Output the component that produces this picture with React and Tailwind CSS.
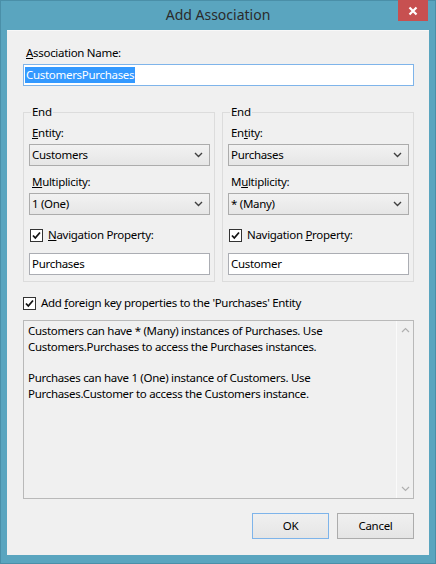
import React from "react";

const font = { fontFamily: '"Noto Sans", "Open Sans", sans-serif' };

function Chevron() {
  return (
    <svg width="9" height="6" viewBox="0 0 9 6" className="shrink-0">
      <path d="M1 1 L4.5 4.5 L8 1" fill="none" stroke="#404040" strokeWidth="1.4" />
    </svg>
  );
}

function Select({ value }) {
  return (
    <div className="h-[22px] border border-[#acacac] bg-gradient-to-b from-[#f2f2f2] to-[#e6e6e6] flex items-center pl-[2px] pr-[6px] text-black">
      <span className="flex-1">{value}</span>
      <Chevron />
    </div>
  );
}

function Checkbox() {
  return (
    <div className="w-[13px] h-[13px] border border-[#333] bg-white flex items-center justify-center shrink-0">
      <svg width="11" height="11" viewBox="0 0 11 11">
        <path d="M2 5.5 L4.3 8 L9 2.5" fill="none" stroke="#111" strokeWidth="1.8" />
      </svg>
    </div>
  );
}

function Group({ entity, multiplicity, nav, entityLabel, multLabel, navLabel }) {
  return (
    <div className="w-[192px] h-[170px] border border-[#dcdcdc] pl-[5px] pr-[4px] pb-[6px]">
      <div className="h-[0px] relative">
        <span className="absolute -top-[9px] left-[2px] bg-[#f0f0f0] px-[1px] leading-[16px] text-black">End</span>
      </div>
      <div className="mt-[12px] h-[16px] leading-[16px] pl-[3px]">{entityLabel}</div>
      <div className="mt-[3px]"><Select value={entity} /></div>
      <div className="mt-[8px] h-[16px] leading-[16px] pl-[3px]">{multLabel}</div>
      <div className="mt-[3px]"><Select value={multiplicity} /></div>
      <div className="mt-[12px] h-[16px] flex items-center gap-[5px] pl-[1px]">
        <Checkbox />
        <span className="leading-[16px]">{navLabel}</span>
      </div>
      <div className="mt-[10px] h-[22px] border border-[#abadb3] bg-white flex items-center pl-[2px]">{nav}</div>
    </div>
  );
}

export default function App() {
  return (
    <div style={font} className="w-[436px] h-[564px] bg-[#5aa5bf] border border-[#4a8fa8] flex flex-col text-black text-[11.5px] tracking-[-0.3px]">
      <div className="h-[29px] relative flex items-center justify-center">
        <span className="text-[14px] tracking-[0px] text-[#2b2b2b] leading-[20px] -mt-[1px]">Add Association</span>
        <div className="absolute top-[-1px] right-[7px] w-[30px] h-[21px] bg-[#c75050] flex items-center justify-center">
          <svg width="10" height="10" viewBox="0 0 10 10">
            <path d="M1.5 1.5 L8.5 8.5 M8.5 1.5 L1.5 8.5" stroke="#fff" strokeWidth="2.2" />
          </svg>
        </div>
      </div>
      <div className="mx-[6px] h-[525px] bg-[#f0f0f0] border-t border-[#f8f8f8] pl-[16px] pr-[15px] pt-[14px] flex flex-col">
        <div className="h-[16px] leading-[16px] pl-[3px]"><u>A</u>ssociation Name:</div>
        <div className="mt-[3px] h-[22px] border border-[#7eb4ea] bg-white flex items-center pl-[1px]">
          <span className="bg-[#3399ff] text-white leading-[16px] px-[1px]">CustomersPurchases</span>
        </div>
        <div className="mt-[26px] flex gap-[7px]">
          <Group
            entity="Customers"
            multiplicity="1 (One)"
            nav="Purchases"
            entityLabel={<><u>E</u>ntity:</>}
            multLabel={<><u>M</u>ultiplicity:</>}
            navLabel={<><u>N</u>avigation Property:</>}
          />
          <Group
            entity="Purchases"
            multiplicity="* (Many)"
            nav="Customer"
            entityLabel={<>En<u>t</u>ity:</>}
            multLabel={<>M<u>u</u>ltiplicity:</>}
            navLabel={<>Navigation <u>P</u>roperty:</>}
          />
        </div>
        <div className="mt-[13px] h-[16px] flex items-center gap-[5px]">
          <Checkbox />
          <span className="leading-[16px]">Add <u>f</u>oreign key properties to the 'Purchases' Entity</span>
        </div>
        <div className="mt-[9px] h-[179px] border border-[#b9b9b9] flex">
          <div className="flex-1 pl-[4px] pt-[2px] leading-[15.5px]">
            <div>Customers can have * (Many) instances of Purchases. Use</div>
            <div>Customers.Purchases to access the Purchases instances.</div>
            <div className="h-[16px]"></div>
            <div>Purchases can have 1 (One) instance of Customers. Use</div>
            <div>Purchases.Customer to access the Customers instance.</div>
          </div>
          <div className="w-[17px] border-l border-[#fafafa] flex flex-col items-center justify-between py-[6px]">
            <svg width="9" height="6" viewBox="0 0 9 6">
              <path d="M1 5 L4.5 1.5 L8 5" fill="none" stroke="#b0b0b0" strokeWidth="1.2" />
            </svg>
            <svg width="9" height="6" viewBox="0 0 9 6">
              <path d="M1 1 L4.5 4.5 L8 1" fill="none" stroke="#b0b0b0" strokeWidth="1.2" />
            </svg>
          </div>
        </div>
        <div className="mt-[14px] flex justify-end gap-[8px]">
          <div className="w-[77px] h-[26px] border border-[#7eb4ea] bg-gradient-to-b from-[#f0f0f0] to-[#e5e5e5] flex items-center justify-center">OK</div>
          <div className="w-[77px] h-[26px] border border-[#acacac] bg-gradient-to-b from-[#f0f0f0] to-[#e5e5e5] flex items-center justify-center">Cancel</div>
        </div>
      </div>
    </div>
  );
}
